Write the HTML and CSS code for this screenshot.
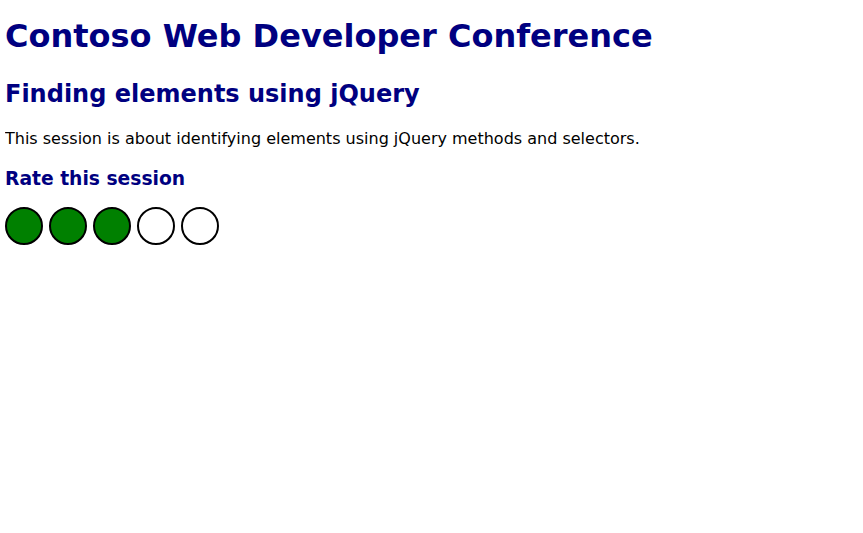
FILE: index.html
```html
<!DOCTYPE html>
<html>
<head>
<meta charset="utf-8">
<title>Contoso Web Developer Conference</title>
<link rel="stylesheet" href="styles.css">
</head>
<body>
<h1 class="title">Contoso Web Developer Conference</h1>
<h2 class="session">Finding elements using jQuery</h2>
<p class="desc">This session is about identifying elements using jQuery methods and selectors.</p>
<h3 class="rate-title">Rate this session</h3>
<div class="rating">
  <span class="dot on"></span>
  <span class="dot on"></span>
  <span class="dot on"></span>
  <span class="dot"></span>
  <span class="dot"></span>
</div>
</body>
</html>
```
FILE: styles.css
```css
body {
  margin: 5px;
  font-family: Verdana, "DejaVu Sans", sans-serif;
  color: #000;
  background: #fff;
}
.title, .session, .rate-title {
  color: #000080;
  font-weight: bold;
}
.title {
  font-size: 32px;
  margin: 12px 0 0;
}
.session {
  font-size: 24px;
  margin: 25px 0 0;
}
.desc {
  font-size: 16px;
  margin: 21px 0 0;
}
.rate-title {
  font-size: 18.72px;
  margin: 20px 0 0;
}
.rating {
  display: flex;
  gap: 6px;
  margin-top: 18px;
}
.dot {
  width: 34px;
  height: 34px;
  border: 2px solid #000;
  border-radius: 50%;
  background: #fff;
}
.dot.on {
  background: #008000;
}
```
